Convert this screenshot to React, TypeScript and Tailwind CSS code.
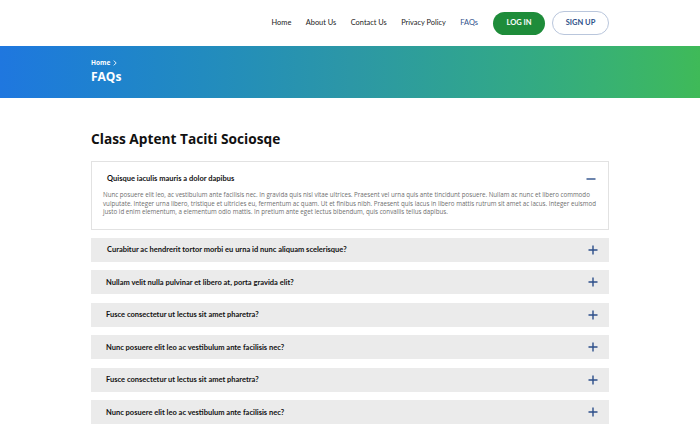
import React from "react";

const questions = [
  "Curabitur ac hendrerit tortor morbi eu urna id nunc aliquam scelerisque?",
  "Nullam velit nulla pulvinar et libero at, porta gravida elit?",
  "Fusce consectetur ut lectus sit amet pharetra?",
  "Nunc posuere elit leo ac vestibulum ante facilisis nec?",
  "Fusce consectetur ut lectus sit amet pharetra?",
  "Nunc posuere elit leo ac vestibulum ante facilisis nec?",
];

function Plus() {
  return (
    <svg width="10" height="10" viewBox="0 0 10 10" className="shrink-0">
      <path d="M5 0.5V9.5M0.5 5H9.5" stroke="#2d4f8a" strokeWidth="1.4" />
    </svg>
  );
}

function Minus() {
  return (
    <svg width="10" height="10" viewBox="0 0 10 10" className="shrink-0">
      <path d="M0.5 5H9.5" stroke="#2d4f8a" strokeWidth="1.4" />
    </svg>
  );
}

export default function App() {
  return (
    <div className="w-[700px] h-[435px] bg-white overflow-hidden" style={{ fontFamily: "Lato, 'Open Sans', sans-serif" }}>
      <header className="h-[46px] flex items-center justify-end pr-[91px]">
        <nav className="flex items-center text-[7.4px] text-[#222] gap-[14.5px] mr-[15px]">
          <span>Home</span>
          <span>About Us</span>
          <span>Contact Us</span>
          <span>Privacy Policy</span>
          <span className="text-[#2d4f8a]">FAQs</span>
        </nav>
        <button className="w-[52px] h-[23px] rounded-full bg-[#1e8c3a] text-white text-[7.5px] font-bold mr-[7px]">LOG IN</button>
        <button className="w-[57px] h-[24px] rounded-full border border-[#b9c6dc] text-[#2d4f8a] text-[7.5px] font-bold">SIGN UP</button>
      </header>
      <div className="h-[52px] bg-gradient-to-r from-[#1f77df] via-[#2c97a6] to-[#3fba58]">
        <div className="w-[518px] mx-auto pt-[12px] text-white" style={{ fontFamily: "'Open Sans', sans-serif" }}>
          <div className="text-[6.5px] font-bold leading-[9px] flex items-center gap-[3px]">
            Home
            <svg width="4" height="6" viewBox="0 0 4 6"><path d="M0.8 0.6L3.2 3L0.8 5.4" stroke="white" strokeWidth="0.9" fill="none" /></svg>
          </div>
          <div className="text-[12px] font-bold leading-[18px] mt-[1px]">FAQs</div>
        </div>
      </div>
      <main className="w-[518px] mx-auto pt-[31px]">
        <h1 className="text-[13.7px] font-bold text-[#111] leading-[20px]" style={{ fontFamily: "'Open Sans', sans-serif" }}>
          Class Aptent Taciti Sociosqe
        </h1>
        <div className="mt-[12px] border border-[#e2e2e2] bg-white pl-[11px] pr-[12px] pt-[10px] pb-[12px]">
          <div className="flex items-center justify-between pl-[4px] h-[14px]">
            <span className="text-[7.5px] font-bold text-[#111]">Quisque iaculis mauris a dolor dapibus</span>
            <Minus />
          </div>
          <p className="mt-[5px] text-[6.2px] leading-[8.6px] text-[#6e6e6e] whitespace-nowrap" style={{ fontFamily: "'Open Sans', sans-serif" }}>
            Nunc posuere elit leo, ac vestibulum ante facilisis nec. In gravida quis nisl vitae ultrices. Praesent vel urna quis ante tincidunt posuere. Nullam ac nunc et libero commodo
            <br />
            vulputate. Integer urna libero, tristique et ultricies eu, fermentum ac quam. Ut et finibus nibh. Praesent quis lacus in libero mattis rutrum sit amet ac lacus. Integer euismod
            <br />
            justo id enim elementum, a elementum odio mattis. In pretium ante eget lectus bibendum, quis convallis tellus dapibus.
          </p>
        </div>
        <div className="mt-[8px] flex flex-col gap-[8.5px]">
          {questions.map((q, i) => (
            <div key={i} className="h-[24px] bg-[#ebebeb] flex items-center justify-between pl-[15px] pr-[11px]">
              <span className={`text-[7.5px] font-bold text-[#111] ${i === 0 ? "pl-[1px]" : ""}`}>{q}</span>
              <Plus />
            </div>
          ))}
        </div>
      </main>
    </div>
  );
}
